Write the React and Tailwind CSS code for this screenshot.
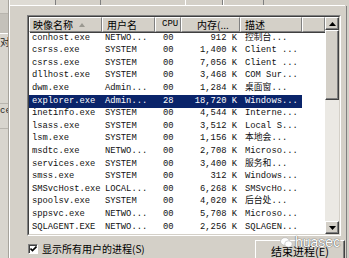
import React from 'react';

const rows = [
  ['conhost.exe', 'NETWO...', '00', '912 K', '控制台...'],
  ['csrss.exe', 'SYSTEM', '00', '1,400 K', 'Client ...'],
  ['csrss.exe', 'SYSTEM', '00', '7,056 K', 'Client ...'],
  ['dllhost.exe', 'SYSTEM', '00', '3,468 K', 'COM Sur...'],
  ['dwm.exe', 'Admin...', '00', '1,284 K', '桌面窗...'],
  ['explorer.exe', 'Admin...', '28', '18,720 K', 'Windows...'],
  ['inetinfo.exe', 'SYSTEM', '00', '4,544 K', 'Interne...'],
  ['lsass.exe', 'SYSTEM', '00', '3,512 K', 'Local S...'],
  ['lsm.exe', 'SYSTEM', '00', '1,156 K', '本地会...'],
  ['msdtc.exe', 'NETWO...', '00', '2,708 K', 'Microso...'],
  ['services.exe', 'SYSTEM', '00', '3,400 K', '服务和...'],
  ['smss.exe', 'SYSTEM', '00', '312 K', 'Windows...'],
  ['SMSvcHost.exe', 'LOCAL...', '00', '6,268 K', 'SMSvcHo...'],
  ['spoolsv.exe', 'SYSTEM', '00', '4,020 K', '后台处...'],
  ['sppsvc.exe', 'NETWO...', '00', '5,708 K', 'Microso...'],
  ['SQLAGENT.EXE', 'NETWO...', '00', '2,256 K', 'SQLAGEN...'],
];

const mono = { fontFamily: "'Liberation Mono','Noto Sans CJK SC',monospace" };
const cjk = { fontFamily: "'Noto Sans CJK SC','Liberation Sans',sans-serif" };

// classic raised header cell
const HeadCell = ({ w, children, className = '' }) => (
  <div className={`${w} h-full shrink-0 whitespace-nowrap overflow-hidden border-t border-l border-t-white border-l-white border-r border-b border-r-[#808080] border-b-[#808080] shadow-[1px_1px_0_#404040] flex items-center ${className}`}>
    {children}
  </div>
);

const ScrollBtn = ({ up }) => (
  <div className="w-[14px] h-[13px] shrink-0 bg-[#d4d0c8] border border-t-white border-l-white border-r-[#404040] border-b-[#404040] shadow-[inset_-1px_-1px_0_#808080] flex items-center justify-center">
    <svg width="7" height="4" viewBox="0 0 7 4">
      {up ? <path d="M3.5 0 L7 4 L0 4 Z" fill="#000" /> : <path d="M0 0 L7 0 L3.5 4 Z" fill="#000" />}
    </svg>
  </div>
);

export default function App() {
  return (
    <div className="w-[349px] h-[258px] overflow-hidden bg-[#d4d0c8] flex relative" style={mono}>
      {/* window behind, left edge */}
      <div className="w-[9px] h-full shrink-0 bg-[#d8d5ce] border-r border-r-[#a6a39c] flex flex-col overflow-hidden">
        <div className="h-[14px] shrink-0 border-b border-b-[#b8b5ae]" />
        <div className="h-[20px] shrink-0 bg-[#c4c1ba] border-b border-b-white" />
        <div className="h-[16px] shrink-0 text-[10px] leading-[16px] text-[#222]" style={cjk}>对</div>
        <div className="h-[54px] shrink-0 border-b border-b-[#b8b5ae]" />
        <div className="h-[14px] shrink-0 text-[9px] leading-[14px] text-[#222]">ce</div>
        <div className="flex-1 border-t border-t-[#b8b5ae] mt-[10px]" />
      </div>

      <div className="flex-1 min-h-0 flex flex-col border-l border-l-white">
        {/* tab strip remains */}
        <div className="h-[5px] shrink-0 flex">
          <div className="w-[46px] border-r border-r-[#808080] bg-[#dedbd4]" />
          <div className="w-[45px] border-r border-r-[#808080]" />
          <div className="w-[84px]" />
          <div className="w-[38px] border-l border-l-white border-r border-r-[#808080]" />
          <div className="w-[41px] border-l border-l-white border-r border-r-[#808080]" />
        </div>
        <div className="h-[1px] shrink-0 bg-white mr-[5px]" />

        <div className="flex-1 min-h-0 flex flex-col pl-[17px] pr-[5px] border-r border-r-[#808080] mr-[3px]">
          {/* list view */}
          <div className="mt-[9px] w-[314px] h-[221px] shrink-0 flex border border-t-[#808080] border-l-[#808080] border-r-white border-b-white">
            <div className="flex-1 flex border border-t-[#404040] border-l-[#404040] border-r-[#d4d0c8] border-b-[#d4d0c8]">
              <div className="flex-1 bg-white flex flex-col">
                <div className="h-[15px] shrink-0 flex bg-[#d4d0c8] text-[10px] text-black" style={cjk}>
                  <HeadCell w="w-[73px]" className="pl-[3px] gap-[6px]">
                    <span>映像名称</span>
                    <svg width="6" height="4" viewBox="0 0 6 4"><path d="M3 0 L6 4 L0 4 Z" fill="#9a9890" /></svg>
                  </HeadCell>
                  <HeadCell w="w-[53px]" className="pl-[4px]">用户名</HeadCell>
                  <HeadCell w="w-[26px]" className="pl-[6px] text-[9px]"><span style={mono}>CPU</span></HeadCell>
                  <HeadCell w="w-[59px]" className="pl-[15px]">内存(...</HeadCell>
                  <HeadCell w="w-[62px]" className="pl-[4px]">描述</HeadCell>
                  <HeadCell w="w-[23px]" />
                </div>
                <div className="flex flex-col text-[8.8px] text-[#111]">
                  {rows.map((r, i) => {
                    const sel = i === 5;
                    return (
                      <div key={i} className="h-[12.6px] shrink-0 flex items-center whitespace-nowrap">
                        <div className={`w-[273px] h-full flex items-center ${sel ? 'bg-[#0a246a] text-white' : ''}`}>
                          <div className="w-[73px] pl-[3px]">{r[0]}</div>
                          <div className="w-[53px] pl-[3px]">{r[1]}</div>
                          <div className="w-[26px] pl-[8px]">{r[2]}</div>
                          <div className="w-[59px] pr-[3px] text-right">{r[3]}</div>
                          <div className="w-[62px] pl-[5px] overflow-hidden">{r[4]}</div>
                        </div>
                      </div>
                    );
                  })}
                </div>
              </div>
              {/* scrollbar */}
              <div className="w-[14px] flex flex-col bg-[#ebe9e4]">
                <ScrollBtn up />
                <div className="h-[70px] shrink-0 bg-[#d4d0c8] border border-t-white border-l-white border-r-[#404040] border-b-[#404040] shadow-[inset_-1px_-1px_0_#808080]" />
                <div className="flex-1" />
                <ScrollBtn />
              </div>
            </div>
          </div>

          {/* bottom controls */}
          <div className="flex items-start justify-between mt-[4px] shrink-0">
            <label className="flex items-center gap-[4px] mt-[1px] ml-[1px] text-[10px] text-black" style={cjk}>
              <span className="w-[10px] h-[10px] bg-white border border-t-[#808080] border-l-[#808080] border-r-white border-b-white shadow-[inset_1px_1px_0_#404040] flex items-center justify-center">
                <svg width="7" height="6" viewBox="0 0 7 6"><path d="M0.5 2.5 L2.5 4.5 L6.5 0.5" stroke="#000" strokeWidth="1.6" fill="none" /></svg>
              </span>
              <span>显示所有用户的进程(S)</span>
            </label>
            <div className="relative w-[90px] h-[23px] mr-[-4px] bg-[#d4d0c8] border border-t-white border-l-white border-r-[#404040] border-b-[#404040] shadow-[inset_-1px_-1px_0_#808080] flex items-center justify-center text-[11px] text-black" style={cjk}>
              结束进程(E)
            </div>
          </div>
        </div>
      </div>

      {/* watermark */}
      <div className="absolute left-[280px] top-[235px] flex items-center gap-[2px]">
        <svg width="13" height="11" viewBox="0 0 13 11">
          <ellipse cx="5" cy="4.5" rx="4.5" ry="3.8" fill="#fff" stroke="#b0b0b0" strokeWidth="0.6" />
          <ellipse cx="8.5" cy="7" rx="3.8" ry="3.2" fill="#fff" stroke="#b0b0b0" strokeWidth="0.6" />
        </svg>
        <span className="text-[14px] leading-[14px] text-white [text-shadow:0_0_1px_#555,0_0_1px_#555]" style={{ fontFamily: "'Liberation Sans',sans-serif" }}>huasec</span>
      </div>
    </div>
  );
}
